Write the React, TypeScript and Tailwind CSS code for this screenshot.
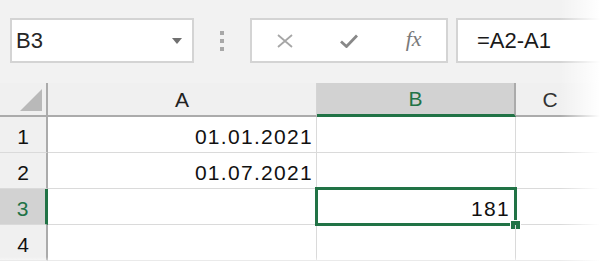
import React from 'react';

const rows = [
  { n: '1', a: '01.01.2021', b: '' },
  { n: '2', a: '01.07.2021', b: '' },
  { n: '3', a: '', b: '181' },
  { n: '4', a: '', b: '' },
];

const cellFont = { fontFamily: '"Liberation Sans", Arial, sans-serif' };

export default function App() {
  return (
    <div className="relative w-[600px] h-[265px] overflow-hidden bg-white" style={cellFont}>
      {/* Formula bar */}
      <div className="flex items-start h-[83px] bg-[#f2f2f2] pl-[10px] pt-[18px]">
        <div className="flex items-center w-[184px] h-[45px] bg-white border-2 border-[#d4d4d4] pl-[4px] pr-[10px]">
          <span className="flex-1 text-[22px] text-[#262626] leading-none">B3</span>
          <svg width="10" height="6" viewBox="0 0 10 6">
            <path d="M0 0 L10 0 L5 6 Z" fill="#707070" />
          </svg>
        </div>
        <div className="flex flex-col items-center justify-center gap-[4px] w-[56px] h-[45px]">
          <span className="w-[4px] h-[4px] bg-[#a8a8a8]" />
          <span className="w-[4px] h-[4px] bg-[#a8a8a8]" />
          <span className="w-[4px] h-[4px] bg-[#a8a8a8]" />
        </div>
        <div className="flex items-center w-[198px] h-[45px] bg-white border-2 border-[#d4d4d4]">
          <div className="w-[66px] flex justify-center pl-[2px]">
            <svg width="18" height="14" viewBox="0 0 18 14">
              <path d="M2 1 L16 13 M16 1 L2 13" stroke="#a6a6a6" strokeWidth="1.8" fill="none" />
            </svg>
          </div>
          <div className="w-[66px] flex justify-center">
            <svg width="18" height="14" viewBox="0 0 18 14">
              <path d="M1 7.5 L6.5 12.5 L17 1.5" stroke="#888" strokeWidth="2.8" fill="none" />
            </svg>
          </div>
          <div className="w-[66px] flex justify-center">
            <span
              className="text-[22px] italic text-[#7a7a7a] leading-none -mt-[4px]"
              style={{ fontFamily: '"Liberation Serif", "Times New Roman", serif' }}
            >
              fx
            </span>
          </div>
        </div>
        <div className="flex items-center flex-1 h-[45px] ml-[8px] bg-white border-2 border-r-0 border-[#d4d4d4] pl-[19px]">
          <span className="text-[22px] text-[#1a1a1a] leading-none">=A2-A1</span>
        </div>
      </div>

      {/* Grid */}
      <div className="grid grid-cols-[48px_269px_199px_1fr] grid-rows-[34px_36px_36px_36px_36px] text-[21px] text-[#111]">
        {/* header row */}
        <div className="relative bg-[#f0f0f0] border-r-2 border-b-2 border-[#ababab]">
          <svg className="absolute left-[20px] top-[6px]" width="23" height="23" viewBox="0 0 23 23">
            <path d="M0 22 L22 0 L22 22 Z" fill="#b9b9b9" />
          </svg>
        </div>
        <div className="flex items-end justify-center pb-[5px] leading-none bg-[#f0f0f0] border-r border-b-2 border-r-[#d4d4d4] border-b-[#ababab] text-[#222]">
          A
        </div>
        <div className="flex items-end justify-center pb-[5px] leading-none bg-[#d2d2d2] border-r-2 border-b-[3px] border-r-[#ababab] border-b-[#217346] text-[#217346]">
          B
        </div>
        <div className="flex items-end justify-center pb-[5px] leading-none bg-[#f0f0f0] border-b-2 border-[#ababab] text-[#333] pr-[16px]">
          C
        </div>

        {rows.map((r) => {
          const sel = r.n === '3';
          return (
            <React.Fragment key={r.n}>
              <div
                className={
                  sel
                    ? 'flex items-end justify-center pb-[5px] leading-none bg-[#d2d2d2] border-r-[3px] border-b border-r-[#217346] border-b-[#dadada] text-[#217346]'
                    : 'flex items-end justify-center pb-[5px] leading-none bg-[#f0f0f0] border-r-2 border-b border-r-[#ababab] border-b-[#dadada] text-[#111]'
                }
              >
                {r.n}
              </div>
              <div className="flex items-end justify-end pb-[5px] pr-[3px] leading-none tracking-[1.3px] border-r border-b border-[#dadada]">
                {r.a}
              </div>
              <div className="relative flex items-end justify-end pb-[5px] pr-[5px] leading-none tracking-[1.3px] border-r border-b border-[#dadada]">
                {r.b}
                {sel && (
                  <>
                    <div className="absolute -left-[2px] -top-[2px] -right-[2px] -bottom-[2px] border-[3px] border-[#217346]" />
                    <div className="absolute -right-[6px] -bottom-[6px] w-[11px] h-[10px] bg-[#217346] border border-white" />
                  </>
                )}
              </div>
              <div className="border-b border-[#dadada]" />
            </React.Fragment>
          );
        })}
      </div>

      {/* edge fade */}
      <div className="pointer-events-none absolute top-0 right-0 w-[40px] h-full bg-gradient-to-r from-transparent to-white" />
      <div className="pointer-events-none absolute left-0 bottom-0 w-full h-[8px] bg-gradient-to-b from-transparent to-white" />
    </div>
  );
}
